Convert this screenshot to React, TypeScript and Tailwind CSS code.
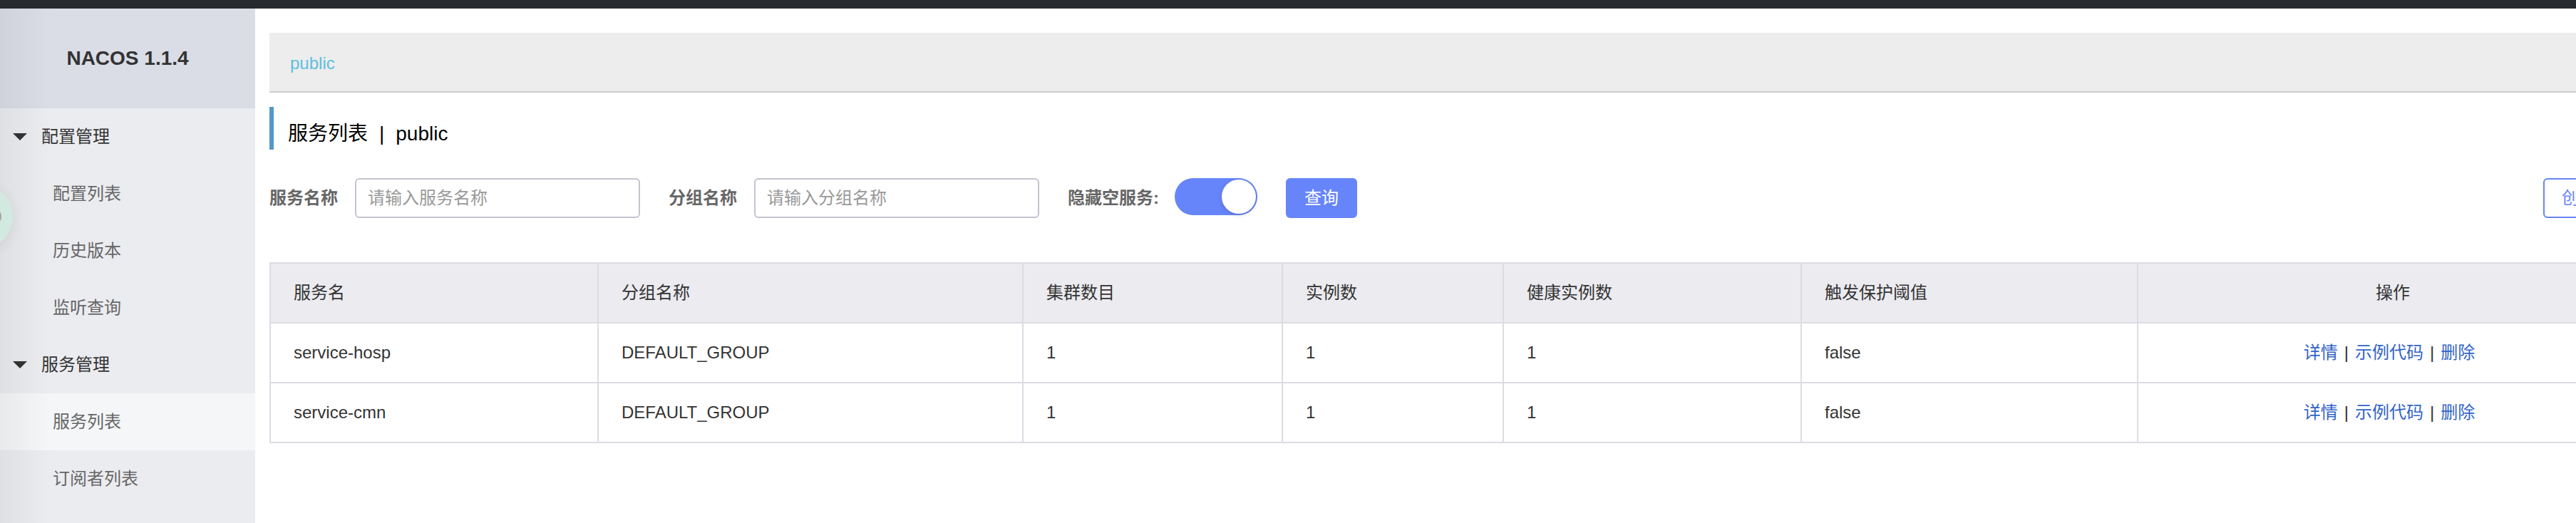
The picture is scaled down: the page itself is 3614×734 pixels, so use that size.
import { useState } from 'react';

const menu = [
  { title: '配置管理', items: ['配置列表', '历史版本', '监听查询'] },
  { title: '服务管理', items: ['服务列表', '订阅者列表'] },
];

const services = [
  { name: 'service-hosp', group: 'DEFAULT_GROUP', clusters: 1, instances: 1, healthy: 1, triggered: 'false' },
  { name: 'service-cmn', group: 'DEFAULT_GROUP', clusters: 1, instances: 1, healthy: 1, triggered: 'false' },
];

const headers = ['服务名', '分组名称', '集群数目', '实例数', '健康实例数', '触发保护阈值'];

function Sidebar() {
  return (
    <aside className="relative w-[358px] shrink-0 overflow-hidden bg-[#ebecf0]">
      <h1 className="flex h-[140px] items-center justify-center bg-[#dadde6] text-[28px] font-bold">
        NACOS 1.1.4
      </h1>
      <nav>
        {menu.map((section) => (
          <section key={section.title}>
            <button type="button" className="flex h-20 w-full items-center pl-[18px] text-left">
              <svg width="20" height="10" viewBox="0 0 20 10" aria-hidden="true">
                <path d="M0 0h20L10 10z" fill="#333" />
              </svg>
              <span className="ml-5">{section.title}</span>
            </button>
            <ul>
              {section.items.map((item) => (
                <li key={item}>
                  <a
                    href="#"
                    className={
                      item === '服务列表'
                        ? 'flex h-20 items-center bg-[#f4f6f8] pl-[74px] text-[#666]'
                        : 'flex h-20 items-center pl-[74px] text-[#666]'
                    }
                  >
                    {item}
                  </a>
                </li>
              ))}
            </ul>
          </section>
        ))}
      </nav>
      <div className="pointer-events-none absolute inset-y-0 left-0 w-[72px] bg-linear-to-r from-black/5 to-transparent" />
      <div className="absolute top-[247px] -left-[72px] flex size-[90px] items-center justify-end rounded-full bg-[#d2e9df] pr-4 shadow-[0_4px_20px_rgba(0,0,0,0.08)]">
        <span className="h-4 w-3 rounded-full border-2 border-[#a5aaa8]" />
      </div>
    </aside>
  );
}

function SearchBar() {
  const [hideEmpty, setHideEmpty] = useState(true);
  const input =
    'h-14 w-[400px] rounded-md border-2 border-[#c4c4d0] bg-white px-4 placeholder:text-[#999] outline-none';
  return (
    <form className="mt-10 flex h-14 items-center" onSubmit={(e) => e.preventDefault()}>
      <label htmlFor="service" className="mr-6 font-bold text-[#666]">服务名称</label>
      <input id="service" className={input} placeholder="请输入服务名称" />
      <label htmlFor="group" className="mr-6 ml-10 font-bold text-[#666]">分组名称</label>
      <input id="group" className={input} placeholder="请输入分组名称" />
      <label htmlFor="hide" className="mr-[22px] ml-10 font-bold text-[#666]">隐藏空服务:</label>
      <input
        id="hide"
        type="checkbox"
        checked={hideEmpty}
        onChange={(e) => setHideEmpty(e.target.checked)}
        className="flex h-[52px] w-[116px] appearance-none self-start rounded-full bg-[#ccc] p-[2px] before:size-12 before:rounded-full before:bg-white before:shadow-[0_2px_6px_rgba(0,0,0,0.15)] before:content-[''] checked:justify-end checked:bg-[#6785fa]"
      />
      <button type="submit" className="ml-10 h-14 w-[100px] rounded-md bg-[#6785fa] text-white">查询</button>
      <button type="button" className="ml-auto h-14 rounded-md border-2 border-[#6785fa] bg-white px-6 text-[#6785fa]">
        创建服务
      </button>
    </form>
  );
}

function ServiceTable() {
  const cell = 'h-[84px] border-r-2 border-b-2 border-[#dcdde3] px-8 py-0 text-left font-normal';
  return (
    <table className="mt-[62px] w-full table-fixed border-separate border-spacing-0 border-t-2 border-l-2 border-[#dcdde3]">
      <colgroup>
        <col className="w-[460px]" />
        <col className="w-[596px]" />
        <col className="w-[364px]" />
        <col className="w-[310px]" />
        <col className="w-[418px]" />
        <col className="w-[472px]" />
        <col />
      </colgroup>
      <thead className="bg-[#ebebf0]">
        <tr>
          {headers.map((h) => (
            <th key={h} className={cell}>{h}</th>
          ))}
          <th className="border-r-2 border-b-2 border-[#dcdde3] font-normal">操作</th>
        </tr>
      </thead>
      <tbody>
        {services.map((s) => (
          <tr key={s.name}>
            <td className={cell}>{s.name}</td>
            <td className={cell}>{s.group}</td>
            <td className={cell}>{s.clusters}</td>
            <td className={cell}>{s.instances}</td>
            <td className={cell}>{s.healthy}</td>
            <td className={cell}>{s.triggered}</td>
            <td className="border-r-2 border-b-2 border-[#dcdde3]">
              <div className="flex justify-center gap-[9px] pr-[10px] text-[#3264c8]">
                <a href="#">详情</a>
                <span className="text-[#333]">|</span>
                <a href="#">示例代码</a>
                <span className="text-[#333]">|</span>
                <a href="#">删除</a>
              </div>
            </td>
          </tr>
        ))}
      </tbody>
    </table>
  );
}

export default function App() {
  return (
    <div className="flex min-h-screen flex-col overflow-x-hidden bg-white font-['Liberation_Sans','Noto_Sans_CJK_SC',sans-serif] text-[24px] leading-9 text-[#333]">
      <header className="h-3 shrink-0 bg-[#272a2f]" />
      <div className="flex flex-1">
        <Sidebar />
        <main className="-mr-[102px] min-w-0 flex-1 pt-[34px] pl-5">
          <div className="flex h-[84px] items-center border-b-2 border-[#ccc] bg-[#ededed] pt-1 pl-[29px]">
            <a href="#" className="text-[#5fbfdf]">public</a>
          </div>
          <h2 className="mt-5 flex h-[60px] items-center gap-4 border-l-[6px] border-[#5298cb] pt-4 pl-5 text-[28px] text-black">
            <span>服务列表</span>
            <span>|</span>
            <span>public</span>
          </h2>
          <SearchBar />
          <ServiceTable />
        </main>
      </div>
    </div>
  );
}
